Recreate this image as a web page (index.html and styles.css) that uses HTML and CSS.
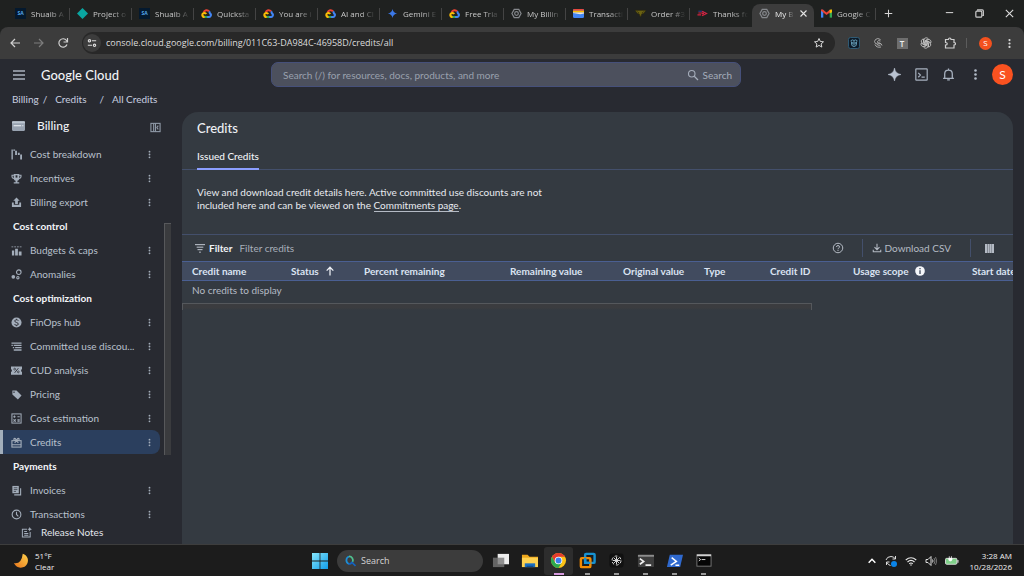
FILE: index.html
```html
<!DOCTYPE html>
<html lang="en">
<head>
<meta charset="utf-8">
<title>My Billing Account – Credits</title>
<link rel="stylesheet" href="styles.css">
</head>
<body>
<svg class="sprite" aria-hidden="true">
  <symbol id="gcp" viewBox="0 1 24 22"><path d="M6 9.500a6.500 6.500 0 0 1 11.500-2" fill="none" stroke="#ea4335" stroke-width="4.500"/><path d="M17.500 7.500a7 7 0 0 1 2 4c4.500 3 1 8-1.500 8h-5" fill="none" stroke="#4285f4" stroke-width="4.500"/><path d="M13.500 19.500H7" fill="none" stroke="#34a853" stroke-width="4.500"/><path d="M8 19.500c-6 0-7-7-1.500-8.500 2.500-.5 4 1 4.500 2.500" fill="none" stroke="#fbbc05" stroke-width="4.500"/></symbol>
  <symbol id="billhex" viewBox="0 0 24 24"><path d="M7 3h10l5 9-5 9H7l-5-9z" fill="none" stroke="#85888c" stroke-width="2.600"/><circle cx="12" cy="12" r="4" fill="none" stroke="#85888c" stroke-width="2.600"/></symbol>
  <symbol id="dots" viewBox="0 0 24 24"><circle cx="12" cy="4.500" r="2.400"/><circle cx="12" cy="12" r="2.400"/><circle cx="12" cy="19.500" r="2.400"/></symbol>
  <symbol id="search" viewBox="0 0 24 24"><circle cx="9.500" cy="9.500" r="6.500" fill="none" stroke="currentColor" stroke-width="2.200"/><path d="M14.500 14.500 22 22" stroke="currentColor" stroke-width="2.400"/></symbol>
</svg>

<header class="browser">
  <nav class="tabs" aria-label="Browser tabs">
    <a class="tab" href="#"><span class="fav sa">SA</span><span class="tab-text">Shuaib A</span></a>
    <a class="tab" href="#"><svg class="fav" viewBox="0 0 24 24"><path d="M12 0l12 12-12 12L0 12z" fill="#0aa5a0"/></svg><span class="tab-text">Project o</span></a>
    <a class="tab" href="#"><span class="fav sa">SA</span><span class="tab-text">Shuaib A</span></a>
    <a class="tab" href="#"><svg class="fav"><use href="#gcp"/></svg><span class="tab-text">Quicksta</span></a>
    <a class="tab" href="#"><svg class="fav"><use href="#gcp"/></svg><span class="tab-text">You are i</span></a>
    <a class="tab" href="#"><svg class="fav"><use href="#gcp"/></svg><span class="tab-text">AI and Cl</span></a>
    <a class="tab" href="#"><svg class="fav" viewBox="0 0 24 24"><path d="M12 2q1.500 8.500 10 10-8.500 1.500-10 10-1.500-8.500-10-10 8.500-1.500 10-10z" fill="#3b78e7"/></svg><span class="tab-text">Gemini E</span></a>
    <a class="tab" href="#"><svg class="fav"><use href="#gcp"/></svg><span class="tab-text">Free Tria</span></a>
    <a class="tab" href="#"><svg class="fav"><use href="#billhex"/></svg><span class="tab-text">My Billin</span></a>
    <a class="tab" href="#"><svg class="fav" viewBox="0 0 24 24"><rect x="0" y="2" width="24" height="20" rx="3" fill="#4285f4"/><path d="M0 5q0-3 3-3h18q3 0 3 3v1H0z" fill="#e9473c"/><path d="M0 6h24v4H0z" fill="#fbbc05"/><path d="M0 10h24v2l-8 1.500L0 11z" fill="#f4e7d0"/></svg><span class="tab-text">Transacti</span></a>
    <a class="tab" href="#"><svg class="fav" viewBox="0 0 24 24"><path d="M0 5h24l-5 7-4 1-3 7-3-7-4-1zM5 8l4 3M19 8l-4 3" fill="#6b6212" stroke="#2a2810" stroke-width="1.500"/></svg><span class="tab-text">Order #3</span></a>
    <a class="tab" href="#"><svg class="fav" viewBox="0 0 24 24" fill="none"><path d="M3 7h8l9 5" stroke="#26419b" stroke-width="2"/><path d="M1 15h8M11 7l10 5-10 5M3 11h8l4 1-4 1" stroke="#d6233f" stroke-width="2.400"/></svg><span class="tab-text">Thanks fo</span></a>
    <a class="tab active" href="#" aria-current="page"><svg class="fav"><use href="#billhex"/></svg><span class="tab-text">My B</span><svg class="close" viewBox="0 0 12 12"><path d="M2 2l8 8M10 2l-8 8" stroke="#e3e3e3" stroke-width="1.500"/></svg></a>
    <a class="tab" href="#"><svg class="fav" viewBox="0 0 24 24"><path d="M0 4h5v17H0z" fill="#4285f4"/><path d="M19 4h5v17h-5z" fill="#34a853"/><path d="M0 3h4l8 7 8-7v6l-8 6.500L0 6z" fill="#ea4335"/><path d="M19 4l5-1v6l-5 3z" fill="#fbbc05"/></svg><span class="tab-text">Google C</span></a>
    <button class="newtab" aria-label="New tab"><svg viewBox="0 0 12 12"><path d="M6 1v10M1 6h10" stroke="#d5d5d5" stroke-width="1.400"/></svg></button>
    <span class="winctl">
      <button aria-label="Minimize"><svg viewBox="0 0 12 12"><path d="M2 5h8" stroke="#ccc" stroke-width="1.200"/></svg></button>
      <button aria-label="Restore"><svg viewBox="0 0 12 12" fill="none" stroke="#ccc" stroke-width="1.300"><rect x="2" y="3.500" width="6.500" height="6.500" rx="1"/><path d="M4 3V2h5q1.200 0 1.200 1.200V8H9"/></svg></button>
      <button aria-label="Close"><svg viewBox="0 0 12 12"><path d="M2 2l8 8M10 2l-8 8" stroke="#ddd" stroke-width="1.200"/></svg></button>
    </span>
  </nav>
  <div class="toolbar">
    <button aria-label="Back"><svg viewBox="0 0 12 12" fill="none" stroke="#d0d0d0" stroke-width="1.200"><path d="M11 6H2M6 2 2 6l4 4"/></svg></button>
    <button aria-label="Forward"><svg viewBox="0 0 12 12" fill="none" stroke="#7d7d7d" stroke-width="1.200"><path d="M1 6h9M6 2l4 4-4 4"/></svg></button>
    <button aria-label="Reload"><svg viewBox="0 0 12 12" fill="none" stroke="#d0d0d0" stroke-width="1.200"><path d="M10 7.500A4.200 4.200 0 1 1 9.500 3.500L10.500 5M10.500 1v4h-4"/></svg></button>
    <div class="omnibox">
      <span class="siteinfo"><svg viewBox="0 0 12 12" fill="none" stroke="#ddd" stroke-width="1.400"><circle cx="3" cy="3.300" r="1.400"/><path d="M6 3.300h5M1 8.700h5"/><circle cx="9" cy="8.700" r="1.400"/></svg></span>
      <input class="url" aria-label="Address" value="console.cloud.google.com/billing/011C63-DA984C-46958D/credits/all">
      <button aria-label="Bookmark"><svg viewBox="0 0 24 24" fill="none" stroke="#d8d8d8" stroke-width="2"><path d="M12 3l2.700 6 6.300.6-4.800 4.300 1.500 6.300-5.700-3.400-5.700 3.400 1.500-6.300L3 9.600 9.300 9z"/></svg></button>
    </div>
    <div class="exts">
      <button aria-label="Extension one"><svg viewBox="0 0 24 24"><rect x="1" y="1" width="22" height="22" rx="4" fill="#0c1a28" stroke="#2f5a74" stroke-width="2"/><path d="M5 8q3.500-4 7-1 3.500-3 7 1M7 9v6q1 4 5 4t5-4V9M12 8v9M9.500 10v5M14.500 10v5" fill="none" stroke="#7cc0dd" stroke-width="1.500"/></svg></button>
      <button aria-label="Extension two"><svg viewBox="0 0 24 24" fill="none" stroke="#aaa" stroke-width="2"><path d="M17 5Q11 1 7 5q-4 4 0 8 5 3 9-1M17 8q-5-2-6 1t3 3q5 0 6 5M6 15q3 7 12 5M10 15q3 3 7 1"/></svg></button>
      <button aria-label="Extension three"><span class="ext-t">T</span></button>
      <button aria-label="Extension four"><svg viewBox="0 0 24 24" fill="none" stroke="#c4c4c4" stroke-width="1.700"><g id="knot"><path d="M8 12V6q0-4 4-4.500 3 0 4.500 2L10 7.500V15"/></g><use href="#knot" transform="rotate(60 12 12)"/><use href="#knot" transform="rotate(120 12 12)"/><use href="#knot" transform="rotate(180 12 12)"/><use href="#knot" transform="rotate(240 12 12)"/><use href="#knot" transform="rotate(300 12 12)"/></svg></button>
      <button aria-label="Extensions"><svg viewBox="0 0 24 24" fill="none" stroke="#cfcfcf" stroke-width="2.400"><path d="M3 5h6q0-3 2.500-3T14 5h6v6q3 0 3 2.500T20 16v6H3v-6q3.500 0 3.500-2.500T3 11z"/></svg></button>
    </div>
    <span class="bar-sep"></span>
    <button class="mini-avatar" aria-label="Profile">S</button>
    <button class="menu" aria-label="Browser menu"><svg fill="#d8d8d8"><use href="#dots"/></svg></button>
  </div>
</header>

<div class="console">
  <header class="topbar">
    <button class="burger" aria-label="Main menu"><svg viewBox="0 0 12 12" stroke="#aab2bf" stroke-width="1.500"><path d="M0 2h12M0 6h12M0 10h12"/></svg></button>
    <a class="brand" href="#">Google Cloud</a>
    <form class="search">
      <input aria-label="Search" placeholder="Search (/) for resources, docs, products, and more">
      <button type="button"><svg><use href="#search"/></svg>Search</button>
    </form>
    <div class="actions">
      <button aria-label="Gemini"><svg viewBox="0 0 24 24"><path d="M12 0q1.500 10.500 12 12-10.500 1.500-12 12-1.500-10.500-12-12 10.500-1.500 12-12z" fill="#b9c2d0" stroke="#b9c2d0"/></svg></button>
      <button aria-label="Cloud Shell"><svg viewBox="0 0 24 24" fill="none" stroke="#a6b0be" stroke-width="2.200"><rect x="1.500" y="1.500" width="21" height="21" rx="1"/><path d="M6 9l4 4-4 4M12 17h6"/></svg></button>
      <button aria-label="Notifications"><svg viewBox="0 0 24 24" fill="none" stroke="#a6b0be" stroke-width="2.400"><path d="M2 19h20M5 19v-8q0-7 7-7t7 7v8M12 4V1M9.500 22h5"/></svg></button>
      <button aria-label="More options"><svg fill="#b3bcc9"><use href="#dots"/></svg></button>
    </div>
    <button class="avatar" aria-label="Account">S</button>
  </header>

  <nav class="crumbs" aria-label="Breadcrumb"><a href="#">Billing</a><span class="near">/</span><a href="#">Credits</a><span>/</span><a href="#">All Credits</a></nav>

  <div class="workspace">
    <aside class="side">
      <div class="side-head">
        <svg viewBox="0 0 24 18"><rect width="24" height="18" rx="2" fill="#98a2b0"/><path d="M0 2q0-2 2-2h20q2 0 2 2v2H0z" fill="#bcc5d0"/><path d="M3 8.500h14M19 8.500h2" stroke="#f0f4f8" stroke-width="2"/></svg>
        <h2>Billing</h2>
        <button aria-label="Collapse navigation"><svg viewBox="0 0 24 24" fill="none" stroke="#8f99a7" stroke-width="2.400"><rect x="2" y="3" width="20" height="18"/><path d="M8 3v18M12 3v18M18 8l-3 4 3 4"/></svg></button>
      </div>
      <div class="side-scroll">
        <ul>
          <li><a href="#"><svg viewBox="0 0 24 24"><path d="M1 1h3v22H1zM5 1h4v3H5zM9 4h4v9H9zM15 8h4v5h-4zM20 12h4v11h-4z"/></svg>Cost breakdown</a><button aria-label="More"><svg><use href="#dots"/></svg></button></li>
          <li><a href="#"><svg viewBox="0 0 24 24"><path d="M6 2h12v2h5v4q0 4-5 5-1 3-4 4v3h4v3H6v-3h4v-3q-3-1-4-4-5-1-5-5V4h5zM3.500 6v2q0 2 2.500 3V6zm17 0H18v5q2.500-1 2.500-3z" fill-rule="evenodd"/><path d="M10 5h4v5h-4z" fill="#282a31"/></svg>Incentives</a><button aria-label="More"><svg><use href="#dots"/></svg></button></li>
          <li><a href="#"><svg viewBox="0 0 24 24"><path d="M12 1l7 7h-4v7H9V8H5zM2 12h4v5h12v-5h4v10H2z"/></svg>Billing export</a><button aria-label="More"><svg><use href="#dots"/></svg></button></li>
          <li class="group">Cost control</li>
          <li><a href="#"><svg viewBox="0 0 24 24"><path d="M1 3h4v2H1zM7 3h4v2H7zM13 3h4v2h-4zM19 3h4v2h-4zM2 12h5v11H2zM9 8h6v15H9zM17 14h6v9h-6z"/></svg>Budgets &amp; caps</a><button aria-label="More"><svg><use href="#dots"/></svg></button></li>
          <li><a href="#"><svg viewBox="0 0 24 24"><circle cx="5" cy="17" r="4"/><g fill="none" stroke="currentColor" stroke-width="2.400"><circle cx="17" cy="7" r="5"/><circle cx="15" cy="19" r="2.500"/></g></svg>Anomalies</a><button aria-label="More"><svg><use href="#dots"/></svg></button></li>
          <li class="group">Cost optimization</li>
          <li><a href="#"><svg viewBox="0 0 24 24"><circle cx="12" cy="12" r="11"/><path d="M16 8q-1-2-4-2t-4 2.500q0 2.500 4 3.500t4 3.500q0 2.500-4 2.500t-4-2.500M12 4v2M12 18v2" fill="none" stroke="#282a31" stroke-width="2"/></svg>FinOps hub</a><button aria-label="More"><svg><use href="#dots"/></svg></button></li>
          <li><a href="#"><svg viewBox="0 0 24 24"><path d="M1 3h22v3H1zM6 8h17v3H6zM1 8h3v3H1zM9 13h14v3H9zM4 13h3v3H4zM6 18h17v3H6z"/></svg>Committed use discou...</a><button aria-label="More"><svg><use href="#dots"/></svg></button></li>
          <li><a href="#"><svg viewBox="0 0 24 24"><path d="M0 3h24v6q-2 0-2 3t2 3v6H0v-6q2 0 2-3T0 9z"/><path d="M8 17l8-10" stroke="#282a31" stroke-width="2"/><circle cx="8" cy="9" r="2" fill="none" stroke="#282a31" stroke-width="1.500"/><circle cx="16" cy="15" r="2" fill="none" stroke="#282a31" stroke-width="1.500"/></svg>CUD analysis</a><button aria-label="More"><svg><use href="#dots"/></svg></button></li>
          <li><a href="#"><svg viewBox="0 0 24 24"><path d="M3 3h9l11 11-8 9L3 12zM6.500 5.500a1.500 1.500 0 1 0 .1 0z"/></svg>Pricing</a><button aria-label="More"><svg><use href="#dots"/></svg></button></li>
          <li><a href="#"><svg viewBox="0 0 24 24" fill="none" stroke="currentColor" stroke-width="2.200"><rect x="2" y="2" width="20" height="20"/><path d="M5 8h5M14 8h5M7.500 5.500v5M5.500 14l5 5M10.500 14l-5 5M14 15h5M14 18h5"/></svg>Cost estimation</a><button aria-label="More"><svg><use href="#dots"/></svg></button></li>
          <li class="current"><a href="#" aria-current="page"><svg viewBox="0 0 24 24" fill="none" stroke="currentColor" stroke-width="2.400"><rect x="2" y="8" width="20" height="14"/><path d="M2 17h20M12 8Q5 8 6.500 3.500 9 1 12 8q3-7 5.500-4.500Q19 8 12 8l-4 5M12 8l4 5"/></svg>Credits</a><button aria-label="More"><svg><use href="#dots"/></svg></button></li>
          <li class="group">Payments</li>
          <li><a href="#"><svg viewBox="0 0 24 24"><path d="M3 2h14v16H3z"/><path d="M6 6h8M6 10h8M6 14h5" stroke="#282a31" stroke-width="1.500"/><path d="M7 21.500h14V7" fill="none" stroke="currentColor" stroke-width="2.400"/></svg>Invoices</a><button aria-label="More"><svg><use href="#dots"/></svg></button></li>
          <li><a href="#"><svg viewBox="0 0 24 24" fill="none" stroke="currentColor" stroke-width="2.400"><circle cx="12" cy="12" r="9.500"/><path d="M12 6v6l4 4"/></svg>Transactions</a><button aria-label="More"><svg><use href="#dots"/></svg></button></li>
        </ul>
        <div class="thumb"></div>
      </div>
      <a class="release" href="#"><svg viewBox="0 0 24 24" fill="none" stroke="#a3adba" stroke-width="2.200"><path d="M13 5H3v17h17V11M7 10h6M7 14h9M7 18h9"/><path d="M19 0q.5 4.500 5 5-4.500.5-5 5-.5-4.500-5-5 4.500-.5 5-5z" fill="#a3adba" stroke="none"/></svg>Release Notes</a>
    </aside>

    <main class="page">
      <h1>Credits</h1>
      <div class="page-tabs"><a href="#" aria-current="page">Issued Credits</a></div>
      <p class="intro">View and download credit details here. Active committed use discounts are not included here and can be viewed on the <a href="#">Commitments page</a>.</p>
      <div class="filter">
        <label for="filter"><svg viewBox="0 0 12 12" stroke="#c3c9d2" stroke-width="1.200"><path d="M0 2h12M2 5h8M3 8h6M5 11h2"/></svg>Filter</label>
        <input id="filter" placeholder="Filter credits">
        <button class="help" aria-label="Help"><svg viewBox="0 0 24 24" fill="none" stroke="#b4bac4" stroke-width="2"><circle cx="12" cy="12" r="9.500"/><path d="M9 10q0-3 3-3t3 3q0 1.300-1.500 2T12 14.500M12 16v2"/></svg></button>
        <button class="csv"><svg viewBox="0 0 24 24" fill="none" stroke="#b4bac4" stroke-width="2.600"><path d="M12 2v13M6 10l6 6 6-6M3 16v5h18v-5"/></svg>Download CSV</button>
        <button class="cols" aria-label="Column display options"><svg viewBox="0 0 9 9" fill="#b4bac4"><path d="M0 0h2v9H0zM2.400 0h2v9h-2zM4.700 0h2v9h-2zM7 0h2v9H7z"/></svg></button>
      </div>
      <div class="table-wrap">
        <table>
          <colgroup><col class="c-name"><col class="c-status"><col class="c-pct"><col class="c-rem"><col class="c-orig"><col class="c-type"><col class="c-id"><col class="c-scope"><col class="c-start"></colgroup>
          <thead><tr>
            <th>Credit name</th>
            <th>Status<svg class="arrow" viewBox="0 0 12 12" fill="none" stroke="#eef1f6" stroke-width="1.500"><path d="M6 11.500V1.500M2 5.500l4-4 4 4"/></svg></th>
            <th>Percent remaining</th><th>Remaining value</th><th>Original value</th><th>Type</th><th>Credit ID</th>
            <th>Usage scope<svg class="info" viewBox="0 0 12 12"><circle cx="6" cy="6" r="5.800" fill="#f4f6fa"/><path d="M6 2.300v1.500M6 5v4.500" stroke="#414b5f" stroke-width="1.600"/></svg></th>
            <th>Start date</th>
          </tr></thead>
          <tbody><tr><td colspan="9">No credits to display</td></tr></tbody>
        </table>
      </div>
      <div class="hscroll"></div>
    </main>
  </div>
</div>

<footer class="taskbar">
  <div class="weather">
    <svg viewBox="0 0 24 24"><defs><linearGradient id="moon" x1="1" y1="0" x2="0" y2="1"><stop offset="0" stop-color="#ffd34d"/><stop offset="1" stop-color="#e8731a"/></linearGradient></defs><path d="M14 1a11.500 11.500 0 1 1-14 15q12 2 14-15z" fill="url(#moon)"/></svg>
    <div><div>51°F</div><div>Clear</div></div>
  </div>
  <div class="dock">
    <button class="start" aria-label="Start"><svg viewBox="0 0 16 16"><defs><linearGradient id="win" x1="0" y1="0" x2="1" y2="1"><stop offset="0" stop-color="#86e6fb"/><stop offset="1" stop-color="#109be8"/></linearGradient></defs><path d="M0 0h7.600v7.600H0zM8.400 0H16v7.600H8.400zM0 8.400h7.600V16H0zM8.400 8.400H16V16H8.400z" fill="url(#win)"/></svg></button>
    <label class="tasksearch"><svg viewBox="0 0 24 24" fill="none"><path d="M10 18a8 8 0 0 1 0-15" stroke="#1e8fd6" stroke-width="3.500"/><path d="M10 3a7.500 7.500 0 0 1 7 11" stroke="#4fc08f" stroke-width="3.500"/><path d="M9 18q5 0 7-3l7 7" stroke="#1463c0" stroke-width="3.500"/></svg><input aria-label="Taskbar search" placeholder="Search"></label>
    <button class="app" aria-label="Task view"><svg viewBox="0 0 18 18"><path d="M6 2h12v11H6z" fill="#ededed"/><path d="M1 6h12v10H1z" fill="#777" fill-opacity=".8"/></svg></button>
    <button class="app" aria-label="File Explorer"><svg viewBox="0 0 18 18"><path d="M1 3h6l2 2h9v11H1z" fill="#eea71c"/><path d="M1 6h17v10H1z" fill="#ffd251"/><path d="M4 12h11v4H4z" fill="#1c6fc0"/><path d="M6 14.500h7V16H6z" fill="#104c8c"/></svg></button>
    <button class="app on" aria-label="Chrome"><svg viewBox="0 0 18 18"><circle cx="9" cy="9" r="8" fill="#fbc116"/><path d="M2.100 5A8 8 0 0 1 15.900 5H9L5.500 11z" fill="#e33b2e"/><path d="M2.100 5A8 8 0 0 0 9 17l3.500-6H5.500z" fill="#2da94f"/><circle cx="9" cy="9" r="4" fill="#fff"/><circle cx="9" cy="9" r="3.100" fill="#3b7ded"/></svg></button>
    <button class="app run" aria-label="VMware"><svg viewBox="0 0 18 18" fill="none" stroke-width="2.600"><rect x="6.500" y="2" width="10" height="9.500" rx="1" stroke="#1792d1"/><rect x="2" y="6.500" width="10" height="9.500" rx="1" stroke="#f38b00"/><path d="M6.500 6v5.500H12" stroke="#1792d1"/></svg></button>
    <button class="app run" aria-label="ChatGPT"><svg viewBox="0 0 18 18"><rect x="1.500" y="1.500" width="15" height="15" rx="3" fill="#111"/><g stroke="#e0e0e0" stroke-width="1" fill="none"><circle cx="9" cy="9" r="4.800" stroke-dasharray="3 2"/><path d="M9 5v8M5 9h8M6 6l6 6M12 6l-6 6"/></g></svg></button>
    <button class="app run" aria-label="Terminal"><svg viewBox="0 0 18 18"><rect x="1" y="3" width="17" height="13" rx="1" fill="#3e3e3e"/><path d="M1 3h17v2H1z" fill="#8d8d8d"/><path d="M3 7l4 3-4 3M9 14h6" fill="none" stroke="#eee" stroke-width="1.800"/></svg></button>
    <button class="app run" aria-label="PowerShell"><svg viewBox="0 0 18 18"><path d="M4 3h14l-3 13H1z" fill="#2f69ce"/><path d="M6 6l5 4-6 4M10 14h4" fill="none" stroke="#fff" stroke-width="1.600"/></svg></button>
    <button class="app run" aria-label="Command Prompt"><svg viewBox="0 0 18 18"><rect x="2" y="3" width="15" height="12" fill="#050505" stroke="#777"/><path d="M2 3.500h15" stroke="#d0d0d0" stroke-width="2"/><path d="M4 6.500l2 1.500-2 1.500M7 8h4" fill="none" stroke="#ddd" stroke-width="1"/></svg></button>
  </div>
  <div class="tray">
    <svg viewBox="0 0 12 12" class="chev"><path d="M2 8l4-4 4 4" fill="none" stroke="#fff" stroke-width="1.800"/></svg>
    <svg viewBox="0 0 24 24" fill="none" stroke="#ddd" stroke-width="2"><path d="M2 10Q4 3 12 3q6 0 9 5M21 2v6h-6M3 20v-6h6M4 15q2 5 7 6"/><circle cx="18" cy="18" r="6" fill="#0a84e8" stroke="none"/></svg>
    <svg viewBox="0 0 24 24" fill="none" stroke="#e6e6e6" stroke-width="2.400"><path d="M1.500 10q10.500-9 21 0M5 14q7-6.500 14 0M8.500 17.500q3.500-3 7 0"/><circle cx="12" cy="20" r="1.500" fill="#e6e6e6" stroke="none"/></svg>
    <svg viewBox="0 0 24 24" fill="none" stroke="#ddd" stroke-width="2"><path d="M2 9h4l6-6v18l-6-6H2zM15 9q2 3 0 6"/><path d="M18 6q4 6 0 12M21 4q5 8 0 16" stroke="#777"/></svg>
    <svg viewBox="0 0 26 18" class="batt"><rect x="1" y="5" width="21" height="11" rx="2" fill="#7fd089" stroke="#e8e8e8" stroke-width="1.600"/><path d="M24 8v5" stroke="#e8e8e8" stroke-width="2"/><path d="M8 1v4M12 1v4M7 5h6v3q-1 2-3 2t-3-2z" stroke="#fff" stroke-width="1.300" fill="#fff"/></svg>
    <div class="clock"><div>3:28 AM</div><div>10/28/2026</div></div>
  </div>
</footer>
</body>
</html>
```
FILE: styles.css
```css
* { box-sizing: border-box; }
:root {
  --ui: Lato, "Open Sans", sans-serif;
  --os: "Open Sans", "Noto Sans", sans-serif;
  --bg: #282a31;
  --line: #434f6b;
}
body {
  margin: 0;
  height: 100vh;
  display: flex;
  flex-direction: column;
  overflow: hidden;
  background: var(--bg);
  color: #c3c9d2;
  font-family: var(--ui);
  font-size: 10px;
  line-height: 14px;
}
a { color: inherit; text-decoration: none; }
button, input { font: inherit; color: inherit; background: none; border: 0; padding: 0; margin: 0; outline: 0; }
button { display: flex; align-items: center; justify-content: center; }
svg { display: block; flex: none; width: 12px; height: 12px; }
h1, h2, p, ul { margin: 0; padding: 0; }
.sprite { position: absolute; width: 0; height: 0; }

/* Browser frame */
.browser { font-family: var(--os); background: #1f2120; flex: none; }
.tabs { display: flex; align-items: stretch; height: 27px; padding-left: 8px; }
.tab {
  display: flex;
  align-items: center;
  gap: 5px;
  flex: 0 1 62px;
  min-width: 0;
  padding: 0 4px 0 7px;
  font-size: 8px;
  color: #c8c8c8;
  background: linear-gradient(#444, #444) right center / 1px 12px no-repeat;
}
.tab:nth-child(12) { background: none; }
.fav { width: 11px; height: 11px; }
.sa { flex: none; background: #04192e; color: #55a8ea; font-size: 5px; line-height: 11px; font-weight: 700; text-align: center; }
.tab-text {
  flex: 1;
  overflow: hidden;
  white-space: nowrap;
  -webkit-mask-image: linear-gradient(90deg, #000 55%, transparent);
  mask-image: linear-gradient(90deg, #000 55%, transparent);
}
.tab.active { margin-top: 4px; padding: 0 6px 4px 7px; background: #3c3c3c; border-radius: 8px 8px 0 0; color: #eee; }
.close { width: 9px; height: 9px; }
.newtab { width: 24px; }
.newtab svg { width: 9px; height: 9px; }
.winctl { display: flex; margin-left: auto; }
.winctl button { width: 30px; }
.winctl svg { width: 11px; height: 11px; }
.toolbar {
  display: flex;
  align-items: center;
  height: 32px;
  padding: 0 3px;
  background: #3c3c3c;
  border-radius: 8px 8px 0 0;
}
.toolbar > button { width: 24px; height: 24px; }
.omnibox {
  flex: 1;
  display: flex;
  align-items: center;
  height: 22px;
  margin: 0 7px 0 7px;
  padding: 0 10px 0 1px;
  border-radius: 11px;
  background: #282828;
}
.siteinfo { display: grid; place-items: center; width: 18px; height: 18px; border-radius: 50%; background: #3c3c3c; }
.siteinfo svg { width: 10px; height: 10px; }
.url { flex: 1; min-width: 0; padding-left: 5px; color: #dcdcdc; font-size: 9px; }
.exts { display: flex; }
.exts button { width: 24px; height: 24px; }
.exts svg { width: 12px; height: 12px; }
.ext-t { width: 11px; height: 11px; background: #6e6e6e; color: #f0f0f0; font-size: 8px; line-height: 11px; font-weight: 600; }
.bar-sep { width: 1px; height: 10px; margin: 0 12px 0 4px; background: #5c5c5c; }
.toolbar > .mini-avatar { width: 13px; height: 13px; border-radius: 50%; background: #f4511e; color: #fff; font-size: 8px; }
.toolbar > .menu { margin-left: 5px; }
.menu svg { width: 11px; height: 11px; }

/* Console shell */
.console { flex: 1; min-height: 0; display: flex; flex-direction: column; }
.topbar { display: flex; align-items: center; height: 31px; padding: 0 11px 0 13px; }
.brand { width: 230px; margin-left: 16px; font-size: 13px; font-weight: 500; color: #f1f3f6; }
.search {
  flex: 0 1 470px;
  display: flex;
  height: 25px;
  padding: 0 8px 0 11px;
  border: 1px solid #46507a;
  border-radius: 7px;
  background: #4c505d;
}
.search input { flex: 1; min-width: 0; }
.search input::placeholder { color: #9aa1ae; opacity: 1; }
.search button { gap: 4px; color: #a5adbb; }
.actions { display: flex; margin-left: auto; }
.actions button { width: 27px; height: 24px; }
.actions svg { width: 13px; height: 13px; }
.avatar { width: 21px; height: 21px; margin-left: 3px; border-radius: 50%; background: #fa5220; color: #fff; font-size: 12px; }
.crumbs { display: flex; height: 20px; align-items: center; padding: 0 0 2px 12px; color: #c8d0e0; }
.crumbs span { margin: 0 8px 0 13px; }
.crumbs .near { margin: 0 8px 0 4px; }
.workspace { flex: 1; min-height: 0; display: flex; }

/* Side navigation */
.side { width: 182px; flex: none; display: flex; flex-direction: column; }
.side-head { display: flex; align-items: center; height: 32px; flex: none; padding: 0 21px 0 12px; }
.side-head svg { width: 13px; height: 10px; }
.side-head h2 { flex: 1; margin-left: 12px; font-size: 12px; font-weight: 500; color: #eef0f4; }
.side-head button { padding-top: 3px; }
.side-head button svg { width: 11px; height: 11px; }
.side-scroll { flex: 1; min-height: 0; display: flex; overflow: hidden; }
.side ul { width: 160px; list-style: none; }
.side li { display: flex; align-items: center; height: 24px; padding: 0 5px 0 11px; color: #b9c1cd; }
.side li a { flex: 1; display: flex; align-items: center; gap: 8px; white-space: nowrap; }
.side li svg { width: 11px; height: 11px; fill: #a3adba; color: #a3adba; }
.side li svg[fill="none"] { fill: none; }
.side li button { width: 11px; }
.side li button svg { width: 9px; height: 9px; }
.side li.group { padding-left: 13px; color: #f4f6f9; font-weight: 700; }
.side li.current { padding-left: 8px; border-left: 3px solid #a2aebb; border-radius: 0 8px 8px 0; background: #2b3f5e; }
.thumb { width: 7px; height: 232px; margin: 81px 0 0 4px; background: #3a3b3e; border: solid #57585b; border-width: 1px 0 0 1px; }
.release { display: flex; align-items: center; gap: 9px; height: 24px; flex: none; padding-left: 21px; color: #e3e7ed; }
.release svg { width: 11px; height: 11px; }

/* Credits page */
.page {
  flex: 1;
  min-width: 0;
  margin: 2px 11px 0 0;
  overflow: hidden;
  background: #343a41;
  border-radius: 16px 16px 0 0;
}
h1 { padding: 8px 15px 0; font-size: 13px; line-height: 16px; font-weight: 500; color: #eef0f4; }
.page-tabs { display: flex; margin-top: 9px; padding-left: 15px; border-bottom: 1px solid var(--line); }
.page-tabs a { padding: 3px 0 4px; border-bottom: 2px solid #8c9eff; margin-bottom: -1px; line-height: 16px; font-weight: 500; color: #f2f4f7; }
.intro { width: 385px; padding: 16px 15px 22px; line-height: 13px; color: #e8ebf0; }
.intro a { border-bottom: 1px solid #b4bac4; }
.filter { display: flex; align-items: center; height: 27px; padding: 0 19px 0 13px; border-top: 1px solid var(--line); }
.filter label { display: flex; align-items: center; gap: 4px; color: #f0f2f5; font-weight: 700; }
.filter label svg { width: 10px; height: 10px; }
.filter input { flex: 1; min-width: 0; margin-left: 7px; }
.filter input::placeholder { color: #a8afba; opacity: 1; }
.help { margin-right: 18px; }
.csv { height: 18px; gap: 3px; padding: 0 19px 0 9px; border: solid var(--line); border-width: 0 1px; color: #b4bac4; }
.csv svg { width: 10px; height: 10px; }
.cols { margin-left: 14px; }
.cols svg { width: 9px; height: 9px; }
.table-wrap { overflow: hidden; }
table { width: 880px; table-layout: fixed; border-collapse: collapse; }
.c-name { width: 99px; }
.c-status { width: 73px; }
.c-pct { width: 146px; }
.c-rem { width: 113px; }
.c-orig { width: 81px; }
.c-type { width: 66px; }
.c-id { width: 83px; }
.c-scope { width: 119px; }
.c-start { width: 100px; }
thead { background: #414b5f; }
th, td { padding: 0 10px; text-align: left; white-space: nowrap; }
th { height: 19px; line-height: 16px; border: solid #4a5f92; border-width: 1px 0; color: #dbe3f2; font-weight: 700; }
th svg { display: inline-block; vertical-align: middle; margin: -2px 0 0 6px; }
.arrow { width: 10px; height: 10px; }
.info { width: 10px; height: 10px; }
td { height: 18px; color: #b4bac4; }
.hscroll { width: 630px; height: 7px; margin-top: 4px; border: solid #55585c; border-width: 1px 1px 0; background: linear-gradient(#3b3c3f, #3b3c3f 60%, #343a41); }

/* Taskbar */
.taskbar {
  display: grid;
  grid-template-columns: 1fr auto 1fr;
  align-items: center;
  height: 32px;
  flex: none;
  border-top: 1px solid #3d3d3d;
  background: #1c1c1c;
  color: #f0f0f0;
  font: 8px/11px var(--os);
}
.weather { display: flex; align-items: center; gap: 6px; padding-left: 14px; }
.weather svg { width: 15px; height: 15px; }
.dock { display: flex; align-items: center; }
.start { width: 28px; }
.start svg { width: 16px; height: 16px; }
.tasksearch { display: flex; align-items: center; gap: 5px; width: 146px; height: 22px; margin: 0 3px; padding-left: 7px; border-radius: 11px; background: #3c3c3c; font-size: 9px; }
.tasksearch input { width: 100px; }
.tasksearch input::placeholder { color: #d4d4d4; opacity: 1; }
.app { width: 29px; height: 28px; border-radius: 3px; background: center bottom / 5px 2px no-repeat; }
.app svg { width: 17px; height: 17px; }
.app.run { background-image: linear-gradient(#999, #999); }
.app.on { background-color: #2d2d2d; background-image: linear-gradient(#d79ae0, #d79ae0); background-size: 10px 2px; }
.tray { display: flex; align-items: center; justify-content: flex-end; gap: 8px; padding-right: 12px; }
.chev { width: 10px; height: 10px; }
.batt { width: 14px; height: 11px; }
.clock { margin-left: 3px; text-align: right; }
```
